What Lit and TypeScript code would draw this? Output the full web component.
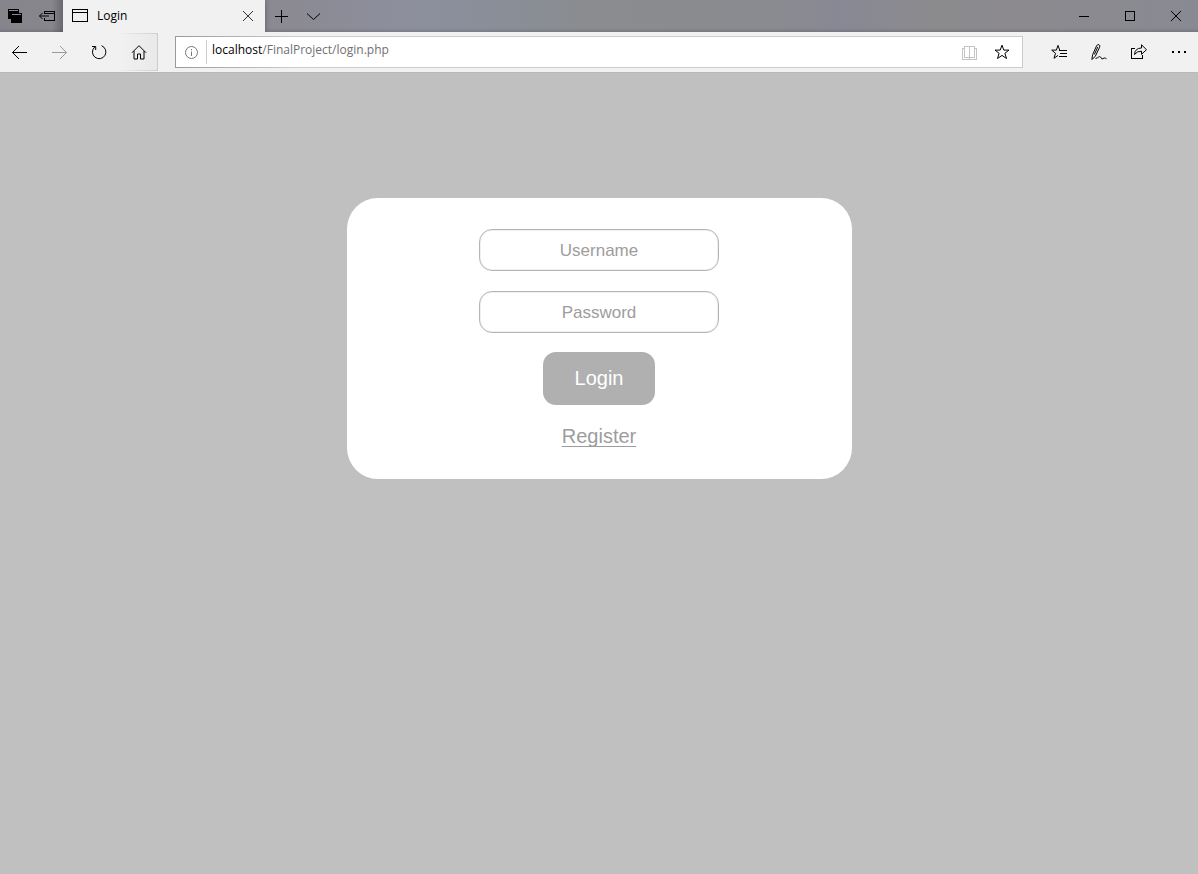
import { LitElement, html, css, svg } from "lit";
import { customElement, property } from "lit/decorators.js";

// 16x16 line icons. A solid icon names its own fill.
const icons: Record<string, unknown> = {
  tabs: svg`<g shape-rendering="crispEdges"><path fill="currentColor" stroke="none" d="M0 1H11V5H3V11H0Z"/><path fill="currentColor" stroke="none" d="M3 5H14V15H3Z"/><path stroke="#8a8a91" d="M1 2.500H10M4 6.500H13"/></g>`,
  aside: svg`<g shape-rendering="crispEdges"><path d="M5.500 6V3.500H15.500V12.500H5.500V10M6 5.500H15"/></g><path d="M0.500 8H10M3.500 5L0.500 8L3.500 11"/>`,
  page: svg`<g shape-rendering="crispEdges"><path d="M0.500 1.500H15.500V13.500H0.500ZM1 4.500H15"/></g>`,
  close: svg`<path d="M3 3L13 13M13 3L3 13"/>`,
  plus: svg`<path shape-rendering="crispEdges" d="M2 8.500H15M8.500 2V15"/>`,
  chevron: svg`<path d="M2 5.500L8.500 11.500L15 5.500"/>`,
  minimize: svg`<path shape-rendering="crispEdges" d="M3 8.500H13"/>`,
  maximize: svg`<path shape-rendering="crispEdges" d="M3.500 3.500H12.500V12.500H3.500Z"/>`,
  back: svg`<path d="M15 8.500H0.500M7 2L0.500 8.500L7 15"/>`,
  forward: svg`<path d="M0 8.500H14.500M8 2L14.500 8.500L8 15"/>`,
  refresh: svg`<path d="M9.500 1.700A6.700 6.700 0 1 1 2.700 3M0 2.500H3.700V6"/>`,
  home: svg`<path d="M1 8.700L8 1.700L15 8.700M3 7V15H6.500V10H9.500V15H13V7"/>`,
  info: svg`<circle cx="8.500" cy="8.500" r="6"/><path d="M8.500 7.500V12M8.500 5V6.300"/>`,
  book: svg`<g shape-rendering="crispEdges"><path d="M2.500 2.500H12.500V13.500H2.500ZM7.500 3V16M2 4.500H0.500V15.500H14.500V4.500H13"/></g>`,
  star: svg`<path d="M8 1.200L9.800 6.100H15L10.900 9.300L12.500 14.500L8 11.400L3.500 14.500L5.100 9.300L1 6.100H6.200Z"/>`,
  favorites: svg`<path d="M8.700 6.100L7 1.400L5.400 6.100H0.700L4.500 9.300L3 14.300L7 11.400"/><path shape-rendering="crispEdges" d="M8 6.500H16M9 9.500H16M8 12.500H16"/>`,
  pen: svg`<path d="M0.800 15.500L1.700 10.500L5.500 2Q6.500 0 8 0.700Q9.400 1.500 8.600 3.300L4.200 12.500L0.800 15.500M3.300 10.500L6.800 3M4.500 14.500C7.500 14 8 11.700 9.500 13C10.800 14.200 10 15.500 12 14.700C13.500 13.500 14 14 15.500 14.700"/>`,
  share: svg`<path shape-rendering="crispEdges" d="M4 4.500H0.500V14.500H11.500V11"/><path d="M3.500 10.500Q4 4 10.500 4V0.800L15.500 5.700L10.500 10.300V7.200Q6 7 3.500 10.500Z"/>`,
  more: svg`<g fill="currentColor" stroke="none" shape-rendering="crispEdges"><path d="M1 7H3V9H1ZM7 7H9V9H7ZM13 7H15V9H13Z"/></g>`,
};

@customElement("line-icon")
class LineIcon extends LitElement {
  @property() name = "";

  static styles = css`
    :host { display: block; width: 16px; height: 16px; flex: none; }
    .glyph { display: block; fill: none; stroke: currentColor; overflow: visible; }
  `;

  render() {
    return html`<svg class="glyph" width="16" height="16" viewBox="0 0 16 16" aria-hidden="true">${icons[this.name]}</svg>`;
  }
}

@customElement("browser-chrome")
class BrowserChrome extends LitElement {
  static styles = css`
    :host { display: block; color: #000; font: 12px/16px "Open Sans", "Noto Sans", sans-serif; }
    button { appearance: none; border: 0; padding: 0; background: none; color: inherit; display: flex; align-items: center; justify-content: center; flex: none; }
    .titlebar {
      display: flex;
      height: 32px;
      background:
        linear-gradient(#0000 28px, #0000001f),
        linear-gradient(90deg, #87858c, #8b8a93 24%, #8d8f9d 34%, #898e97 43%, #8b8c8f 50%, #8a8b90 65%, #888895 70%, #8b8b8e 78%, #8c8a8e 84%, #888992 100%);
    }
    .strip { width: 32px; }
    .lead { display: flex; width: 63px; flex: none; background: linear-gradient(90deg, #0000 52px, #00000038); }
    .lead .strip:first-child { width: 31px; }
    .tab { display: flex; align-items: center; box-sizing: border-box; width: 202px; padding: 0 9px; background: #f1f1f1; box-shadow: 0 0 5px #0005; clip-path: inset(0 -5px 0 0); }
    .title { flex: 1; padding-left: 9px; }
    .tab button { color: #333; }
    .drag { flex: 1; }
    .system { display: flex; }
    .system button { width: 46px; }
    .system button:last-child { width: 45px; }
    .toolbar { display: flex; align-items: center; height: 40px; background: #f1f1f1; border-bottom: 1px solid #b9b9b9; }
    .tool { width: 40px; height: 40px; }
    .tool:last-child { width: 39px; }
    .dim { color: #999; }
    .home {
      width: 38px;
      height: 38px;
      border: 1px solid;
      border-left: 0;
      border-image: linear-gradient(90deg, #f1f1f1, #ccc) 1;
      background: linear-gradient(90deg, #f1f1f1, #e9e9e9);
    }
    .address {
      display: flex;
      align-items: center;
      flex: 1;
      min-width: 0;
      box-sizing: border-box;
      height: 32px;
      margin: 0 16px 0 17px;
      padding: 0 12px 0 7px;
      border: 1px solid transparent;
      background: linear-gradient(#fff, #fff) padding-box, linear-gradient(90deg, #999, #ccc 120px) border-box;
    }
    .info { color: #777; }
    .divider { width: 1px; height: 24px; margin: 0 5px 0 7px; background: #ccc; }
    .url { flex: 1; min-width: 0; color: #707070; padding-bottom: 4px; white-space: nowrap; overflow: hidden; }
    .host { color: #000; }
    .book { color: #c4c4c4; margin-right: 16px; }
  `;

  render() {
    return html`
      <header>
        <div class="titlebar">
          <div class="lead">
            <button class="strip" aria-label="Saved tabs"><line-icon name="tabs"></line-icon></button>
            <button class="strip" aria-label="Set tabs aside"><line-icon name="aside"></line-icon></button>
          </div>
          <div class="tab">
            <line-icon name="page"></line-icon>
            <span class="title">Login</span>
            <button aria-label="Close tab"><line-icon name="close"></line-icon></button>
          </div>
          <button class="strip" aria-label="New tab"><line-icon name="plus"></line-icon></button>
          <button class="strip" aria-label="Tab previews"><line-icon name="chevron"></line-icon></button>
          <div class="drag"></div>
          <div class="system">
            <button aria-label="Minimize"><line-icon name="minimize"></line-icon></button>
            <button aria-label="Maximize"><line-icon name="maximize"></line-icon></button>
            <button aria-label="Close window"><line-icon name="close"></line-icon></button>
          </div>
        </div>
        <nav class="toolbar">
          <button class="tool" aria-label="Back"><line-icon name="back"></line-icon></button>
          <button class="tool dim" aria-label="Forward"><line-icon name="forward"></line-icon></button>
          <button class="tool" aria-label="Refresh"><line-icon name="refresh"></line-icon></button>
          <button class="home" aria-label="Home"><line-icon name="home"></line-icon></button>
          <div class="address">
            <line-icon class="info" name="info"></line-icon>
            <span class="divider"></span>
            <span class="url"><span class="host">localhost</span>/FinalProject/login.php</span>
            <button class="book" aria-label="Reading view"><line-icon name="book"></line-icon></button>
            <button aria-label="Add to favorites"><line-icon name="star"></line-icon></button>
          </div>
          <button class="tool" aria-label="Favorites"><line-icon name="favorites"></line-icon></button>
          <button class="tool" aria-label="Add notes"><line-icon name="pen"></line-icon></button>
          <button class="tool" aria-label="Share"><line-icon name="share"></line-icon></button>
          <button class="tool" aria-label="More"><line-icon name="more"></line-icon></button>
        </nav>
      </header>
    `;
  }
}

@customElement("login-card")
class LoginCard extends LitElement {
  static styles = css`
    :host { display: block; width: 505px; max-width: 100%; font-family: "Liberation Sans", Arial, sans-serif; }
    .card { display: flex; flex-direction: column; align-items: center; gap: 19px; padding: 31px 20px; border-radius: 31px; background: #fff; }
    .fields { display: flex; flex-direction: column; gap: 20px; }
    .field {
      box-sizing: border-box;
      width: 240px;
      max-width: 100%;
      height: 42px;
      padding: 2px 10px 0;
      border: 1px solid #b5b5b5;
      border-radius: 13px;
      background: #fff;
      box-shadow: inset 0 0 0 1px #f0f0f0;
      font: 17px/20px "Liberation Sans", Arial, sans-serif;
      text-align: center;
      outline: none;
    }
    .field::placeholder { color: #9d9d9d; opacity: 1; }
    .submit { width: 112px; height: 53px; padding: 0 0 2px; border: 0; border-radius: 13px; background: #b0b0b0; color: #fff; font: 20px/24px "Liberation Sans", Arial, sans-serif; }
    .register { color: #9d9d9d; font-size: 20px; line-height: 24px; text-decoration-thickness: 1px; text-underline-offset: 3px; text-decoration-skip-ink: none; }
  `;

  render() {
    return html`
      <form class="card" @submit=${(e: Event) => e.preventDefault()}>
        <div class="fields">
          <input class="field" type="text" name="username" placeholder="Username" aria-label="Username">
          <input class="field" type="password" name="password" placeholder="Password" aria-label="Password">
        </div>
        <button class="submit" type="submit">Login</button>
        <a class="register" href="#register">Register</a>
      </form>
    `;
  }
}

@customElement("app-root")
class AppRoot extends LitElement {
  static styles = css`
    :host { display: flex; flex-direction: column; min-height: 100vh; background: #c0c0c0; }
    .content { flex: 1; display: flex; justify-content: center; align-items: flex-start; padding: 125px 20px 20px; }
  `;

  render() {
    return html`
      <browser-chrome></browser-chrome>
      <main class="content"><login-card></login-card></main>
    `;
  }
}
